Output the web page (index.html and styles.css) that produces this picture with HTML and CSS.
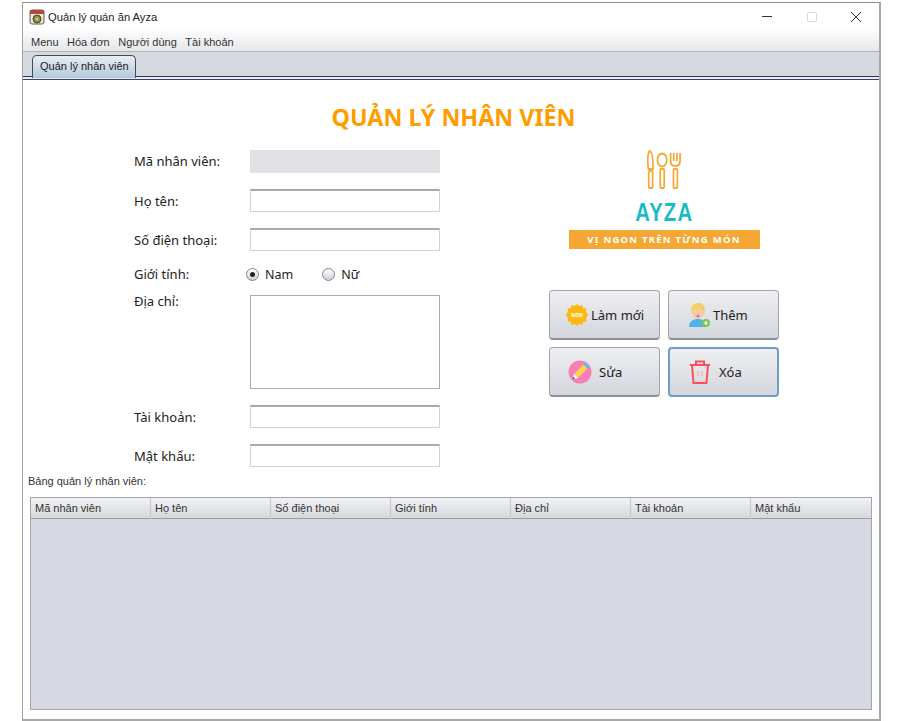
FILE: index.html
```html
<!DOCTYPE html>
<html lang="vi">
<head>
  <meta charset="UTF-8" />
  <title>Quản lý quán ăn Ayza</title>
  <link rel="stylesheet" href="styles.css">
</head>
<body>
  <div class="window">
    <div class="titlebar">
      <div class="title-left">
        <svg class="app-icon" viewBox="0 0 16 16" width="16" height="16">
          <rect x="1" y="1" width="14" height="14" rx="2" fill="#efe7dc" stroke="#6b5a4a"/>
          <rect x="1" y="1" width="14" height="4" fill="#b3473f"/>
          <circle cx="8" cy="10" r="4" fill="#7d8f4e" stroke="#4a4a30"/>
          <circle cx="8" cy="10" r="1.6" fill="#e2c66b"/>
        </svg>
        <span>Quản lý quán ăn Ayza</span>
      </div>
      <div class="win-controls">
        <svg width="12" height="12" viewBox="0 0 12 12"><path d="M1 5.5H11" stroke="#333" fill="none"/></svg>
        <svg width="12" height="12" viewBox="0 0 12 12"><rect x="1.500" y="1.500" width="9" height="9" rx="1" stroke="#d8d8d8" fill="none"/></svg>
        <svg width="12" height="12" viewBox="0 0 12 12"><path d="M1 1L11 11M11 1L1 11" stroke="#333" fill="none"/></svg>
      </div>
    </div>

    <div class="menubar">
      <span>Menu</span>
      <span>Hóa đơn</span>
      <span>Người dùng</span>
      <span>Tài khoản</span>
    </div>

    <div class="tabbar">
      <div class="tab">Quản lý nhân viên</div>
    </div>
    <div class="tab-line"></div>

    <div class="content">
      <h1>QUẢN LÝ NHÂN VIÊN</h1>

      <div class="columns">
        <form class="emp-form">
          <div class="row">
            <label class="label-first">Mã nhân viên:</label>
            <div class="input disabled"></div>
          </div>
          <div class="row">
            <label>Họ tên:</label>
            <div class="input"></div>
          </div>
          <div class="row">
            <label>Số điện thoại:</label>
            <div class="input"></div>
          </div>
          <div class="row row-radio">
            <label>Giới tính:</label>
            <div class="radios">
              <span class="radio checked"></span><span class="radio-text">Nam</span>
              <span class="radio second"></span><span class="radio-text">Nữ</span>
            </div>
          </div>
          <div class="row row-area">
            <label>Địa chỉ:</label>
            <div class="input area"></div>
          </div>
          <div class="row">
            <label>Tài khoản:</label>
            <div class="input"></div>
          </div>
          <div class="row">
            <label>Mật khẩu:</label>
            <div class="input"></div>
          </div>
        </form>

        <div class="side">
          <div class="logo">
            <svg width="34" height="39" viewBox="0 0 36 39" preserveAspectRatio="none" fill="none" stroke="#f5a733" stroke-width="1.800">
              <path d="M2.500 1C5 1 6.500 5 6.500 19H1.500C.5 13 .5 5 2.500 1Z"/>
              <rect x="1.800" y="21" width="4.200" height="17" rx="1"/>
              <ellipse cx="16" cy="10" rx="5" ry="6.500"/>
              <rect x="14" y="19" width="4.200" height="19" rx="1"/>
              <path d="M25 3V11C25 14.500 27 16 30 16C33 16 35 14.500 35 11V3M28.300 3V11M31.700 3V11"/>
              <rect x="28" y="19" width="4.200" height="19" rx="1"/>
            </svg>
            <div class="logo-name">AYZA</div>
            <div class="logo-slogan">VỊ NGON TRÊN TỪNG MÓN</div>
          </div>

          <div class="buttons">
            <button type="button" class="btn btn-new">
              <svg width="22" height="22" viewBox="0 0 24 24">
                <path d="M12 0l2.500 2.300 3.200-1.100 1.200 3.100 3.300.5-.3 3.400L24 12l-2.100 3.800.3 3.400-3.300.5-1.200 3.100-3.200-1.100L12 24l-2.500-2.300-3.200 1.100-1.200-3.100-3.300-.5.3-3.400L0 12l2.100-3.800-.3-3.400 3.300-.5 1.200-3.100 3.200 1.100z" fill="#fdb90f"/>
                <text x="12" y="14" text-anchor="middle" class="new-text">NEW</text>
              </svg>
              <span>Làm mới</span>
            </button>
            <button type="button" class="btn btn-add">
              <svg width="22" height="24" viewBox="0 0 22 24">
                <path d="M1 24C1 18 5 16 10 16C15 16 18 18 18 24Z" fill="#4fb3e8"/>
                <circle cx="10" cy="9" r="6.500" fill="#f8c9a8"/>
                <path d="M3 8C3 2 7 0 11 0C15 0 17 3 17 8C14 7 13 5 12 4C10 6 6 7 3 8Z" fill="#f6cf5e"/>
                <circle cx="10" cy="13" r="1.500" fill="#e8707a"/>
                <circle cx="18" cy="20" r="4" fill="#7ec850"/>
                <path d="M18 18V22M16 20H20" stroke="#fff" stroke-width="1.200"/>
              </svg>
              <span>Thêm</span>
            </button>
            <button type="button" class="btn btn-edit">
              <svg width="24" height="24" viewBox="0 0 24 24">
                <circle cx="12" cy="12" r="11.500" fill="#f77fb8"/>
                <path d="M15.500 4.500L19.500 8.500L10 18L6 14Z" fill="#fbd24e"/>
                <path d="M15.500 4.500L17 3.200C17.500 2.800 18 2.800 18.500 3.200L20.800 5.500C21.200 6 21.200 6.500 20.800 7L19.500 8.500Z" fill="#58c3e8"/>
                <path d="M6 14L10 18L4.500 19.500Z" fill="#fff"/>
                <path d="M5.200 16.800L7 18.600L4.500 19.500Z" fill="#3a5aa8"/>
              </svg>
              <span>Sửa</span>
            </button>
            <button type="button" class="btn btn-delete">
              <svg width="22" height="24" viewBox="0 0 22 24" fill="none" stroke="#fb4f5d" stroke-width="2">
                <path d="M1 5H21M7 5V1.500H15V5M3 5L4.500 23H17.500L19 5"/>
                <path d="M9 11V16M13 11V16" stroke="#f9b4ba" stroke-width="1.500"/>
              </svg>
              <span>Xóa</span>
            </button>
          </div>
        </div>
      </div>

      <div class="table-label">Bảng quản lý nhân viên:</div>
      <div class="table">
        <div class="thead">
          <div>Mã nhân viên</div>
          <div>Họ tên</div>
          <div>Số điện thoại</div>
          <div>Giới tính</div>
          <div>Địa chỉ</div>
          <div>Tài khoản</div>
          <div>Mật khẩu</div>
        </div>
      </div>
    </div>
  </div>
</body>
</html>
```

FILE: styles.css
```css
* {
  box-sizing: border-box;
}

body {
  margin: 0;
  height: 721px;
  background: #fff;
  font-family: "Noto Sans", "Liberation Sans", sans-serif;
  color: #222;
  overflow: hidden;
}

.window {
  width: 859px;
  height: 719px;
  margin: 2px 0 0 22px;
  border: 1px solid #a0a0a0;
  border-top-color: #8c8c8c;
  border-right: 2px solid #a8a8a8;
  border-bottom: 2px solid #a8a8a8;
  display: flex;
  flex-direction: column;
  background: #fff;
}

.titlebar {
  height: 28px;
  display: flex;
  justify-content: space-between;
  align-items: center;
  padding: 0 17px 0 6px;
  font-family: "Liberation Sans", sans-serif;
  font-size: 11.2px;
}

.title-left {
  display: flex;
  align-items: center;
  gap: 3px;
}

.win-controls {
  display: flex;
  gap: 32.5px;
}

.menubar {
  height: 21px;
  display: flex;
  align-items: center;
  padding: 1px 0 0 8px;
  gap: 8.5px;
  font-family: "Liberation Sans", sans-serif;
  font-size: 11px;
  color: #333;
  background: linear-gradient(to bottom, #fbfbfc, #e6e7e9);
  border-bottom: 1px solid #b5b6b8;
}

.tabbar {
  height: 24px;
  padding: 3px 0 0 9px;
  background: #d6d9df;
}

.tab {
  position: relative;
  width: 104px;
  height: 23px;
  padding-left: 7px;
  font-family: "Liberation Sans", sans-serif;
  font-size: 11px;
  line-height: 20px;
  white-space: nowrap;
  color: #222;
  background: linear-gradient(to bottom, #eaeef2, #b4c8dc);
  border: 1px solid #3f4a5e;
  border-bottom: none;
  border-radius: 5px 5px 0 0;
}

.tab-line {
  height: 4px;
  background: #e8ecf3;
  border-top: 1px solid #2f3558;
  border-bottom: 1px solid #3d4362;
}

.content {
  flex: 1;
  display: flex;
  flex-direction: column;
  padding-left: 5px;
}

h1 {
  margin: 21px 0 0;
  text-align: center;
  font-size: 23.3px;
  line-height: 32px;
  font-weight: 700;
  color: #ff9c00;
}

.columns {
  display: flex;
  height: 322px;
  margin-top: 17px;
}

.emp-form {
  width: 412px;
  padding-left: 106px;
  display: flex;
  flex-direction: column;
}

.row {
  display: flex;
  align-items: center;
  height: 23px;
  margin-bottom: 16px;
}

.row label {
  width: 116px;
  font-size: 13px;
  color: #222;
}

.row .label-first {
  margin-top: -2px;
}

.input {
  width: 191px;
  height: 23px;
  background: #fff;
  border: 1px solid #d0d2d6;
  border-top: 2px solid #a9a9a9;
}

.input.disabled {
  background: #dfe1e5;
  border: 1px solid #dfe1e5;
}

.row-radio {
  height: 14px;
  margin: 0 0 14px;
}

.radios {
  display: flex;
  align-items: center;
  margin-left: -4px;
  font-size: 12.5px;
}

.radio {
  width: 13px;
  height: 13px;
  border-radius: 50%;
  border: 1px solid #7f8590;
  background: linear-gradient(to bottom, #fff, #ccd0d6);
  position: relative;
}

.radio.checked::after {
  content: "";
  position: absolute;
  left: 3px;
  top: 3px;
  width: 5px;
  height: 5px;
  border-radius: 50%;
  background: #222;
}

.radio-text {
  margin-left: 6px;
}

.radio.second {
  margin-left: 29px;
}

.row-area {
  height: 94px;
  align-items: flex-start;
}

.row-area label {
  margin-top: -3px;
}

.input.area {
  height: 94px;
  border: 1px solid #a9abb0;
}

.side {
  width: 230px;
  margin-left: 109px;
  display: flex;
  flex-direction: column;
}

.logo {
  display: flex;
  flex-direction: column;
  align-items: center;
}

.logo svg {
  margin-bottom: 10px;
}

.logo-name {
  font-family: "Liberation Sans", sans-serif;
  font-size: 26px;
  line-height: 26px;
  font-weight: 700;
  letter-spacing: 1.5px;
  color: #1cbac6;
  transform: scaleX(0.78);
}

.logo-slogan {
  width: 191px;
  height: 19px;
  margin-top: 5px;
  background: #f5a733;
  color: #fff;
  font-size: 9.5px;
  line-height: 19px;
  font-weight: 700;
  letter-spacing: 1.25px;
  text-align: center;
}

.buttons {
  display: grid;
  grid-template-columns: 111px 111px;
  grid-auto-rows: 50px;
  column-gap: 8px;
  row-gap: 7px;
  margin-top: 41px;
}

.btn {
  display: flex;
  align-items: center;
  gap: 3px;
  padding: 0;
  font-family: inherit;
  font-size: 13px;
  color: #222;
  background: linear-gradient(to bottom, #eeeff2, #d3d6dc);
  border: 1px solid #a2a4a8;
  border-bottom: 2px solid #8d8f94;
  border-radius: 4px;
}

.btn-new {
  padding-left: 16px;
}

.btn-add {
  padding-left: 19px;
}

.btn-edit {
  gap: 7px;
  padding-left: 18px;
}

.btn-delete {
  gap: 8px;
  padding-left: 19px;
  border: 2px solid #6f9cc8;
}

.new-text {
  font-size: 5.5px;
  font-weight: 700;
  fill: #fff;
}

.table-label {
  margin-top: 1px;
  font-family: "Liberation Sans", sans-serif;
  font-size: 11px;
  line-height: 16px;
  color: #333;
}

.table {
  width: 842px;
  height: 213px;
  margin: 8px 0 0 2px;
  background: #d6d9e1;
  border: 1px solid #a0a5b0;
}

.thead {
  display: grid;
  grid-template-columns: repeat(6, 120px) 1fr;
  height: 21px;
  background: linear-gradient(to bottom, #f1f2f4, #d6d8dc);
  border-bottom: 1px solid #9a9da3;
}

.thead div {
  padding-left: 4px;
  font-family: "Liberation Sans", sans-serif;
  font-size: 11px;
  line-height: 21px;
  color: #333;
  border-right: 1px solid #c3c5c9;
}

.thead div:last-child {
  border-right: none;
}
```
